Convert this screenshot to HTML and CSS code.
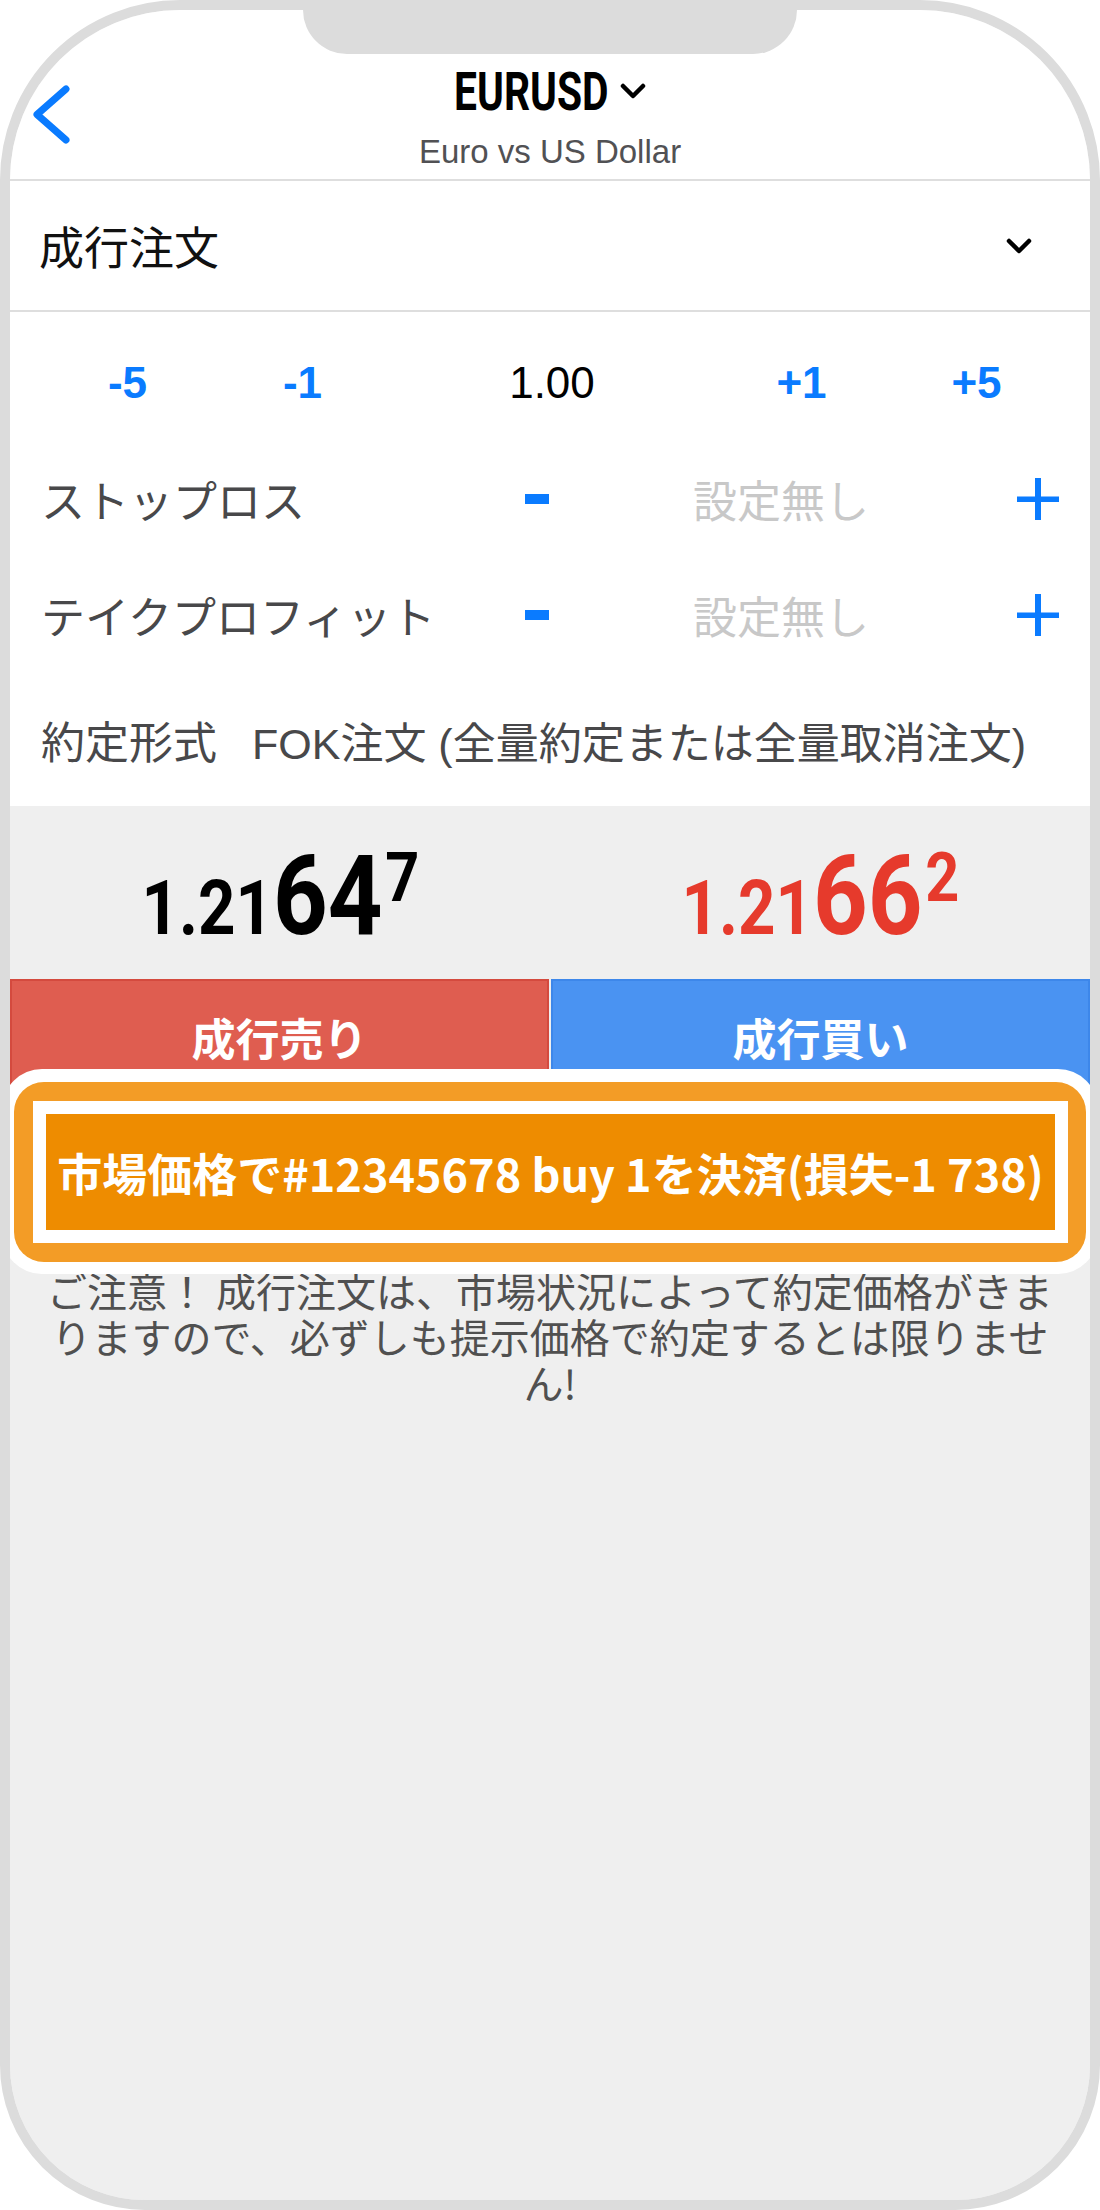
FILE: index.html
```html
<!DOCTYPE html>
<html lang="ja">
<head>
  <meta charset="UTF-8">
  <title>EURUSD 成行注文</title>
  <link rel="stylesheet" href="styles.css">
</head>
<body>

  <div class="phone">
    <div class="notch"></div>

    <header class="nav">
      <a class="back" href="#">
        <svg width="40" height="60" viewBox="0 0 40 60"><polyline points="33,4 4,29.5 33,55" fill="none" stroke="#0a7bff" stroke-width="7" stroke-linecap="round" stroke-linejoin="round"/></svg>
      </a>
      <div class="title">
        <div class="symbol">
          <span class="symbol-name">EURUSD</span>
          <svg class="caret" width="26" height="16" viewBox="0 0 26 16"><polyline points="3,3 13,13 23,3" fill="none" stroke="#000" stroke-width="4.5" stroke-linecap="round" stroke-linejoin="round"/></svg>
        </div>
        <div class="desc">Euro vs US Dollar</div>
      </div>
      <div></div>
    </header>

    <div class="order-type">
      <span>成行注文</span>
      <svg width="26" height="18" viewBox="0 0 26 18"><polyline points="3,4 13,14 23,4" fill="none" stroke="#000" stroke-width="4.5" stroke-linecap="round" stroke-linejoin="round"/></svg>
    </div>

    <section class="params">
      <div class="lot-row">
        <span class="step">-5</span>
        <span class="step">-1</span>
        <span class="lot-value">1.00</span>
        <span class="step">+1</span>
        <span class="step">+5</span>
      </div>

      <div class="param-row">
        <span class="label">ストップロス</span>
        <svg class="minus" width="24" height="10" viewBox="0 0 24 10"><rect width="24" height="10" fill="#0a7bff"/></svg>
        <span class="unset">設定無し</span>
        <svg class="plus" width="42" height="42" viewBox="0 0 42 42"><rect x="18" y="0" width="6" height="42" fill="#0a7bff"/><rect x="0" y="18.5" width="42" height="5.5" fill="#0a7bff"/></svg>
      </div>

      <div class="param-row">
        <span class="label">テイクプロフィット</span>
        <svg class="minus" width="24" height="10" viewBox="0 0 24 10"><rect width="24" height="10" fill="#0a7bff"/></svg>
        <span class="unset">設定無し</span>
        <svg class="plus" width="42" height="42" viewBox="0 0 42 42"><rect x="18" y="0" width="6" height="42" fill="#0a7bff"/><rect x="0" y="18.5" width="42" height="5.5" fill="#0a7bff"/></svg>
      </div>

      <div class="fill-row">
        <span class="label">約定形式</span>
        <span class="fill-value">FOK注文 (全量約定または全量取消注文)</span>
      </div>
    </section>

    <section class="trade">
      <div class="quotes">
        <div class="quote">
          <span class="price">1.21<span class="big">64</span><span class="pip">7</span></span>
        </div>
        <div class="quote ask">
          <span class="price">1.21<span class="big">66</span><span class="pip">2</span></span>
        </div>
      </div>

      <div class="actions">
        <button class="sell">成行売り</button>
        <button class="buy">成行買い</button>
      </div>

      <div class="close-wrap">
        <div class="highlight"><div class="highlight-ring"></div></div>
        <button class="close-btn">市場価格で#12345678 buy 1を決済(損失-1 738)</button>
      </div>

      <p class="note">ご注意！ 成行注文は、市場状況によって約定価格がきまりますので、必ずしも提示価格で約定するとは限りません!</p>
    </section>
  </div>

</body>
</html>
```

FILE: styles.css
```css
body {
  margin: 0;
  padding: 0;
  background: #fff;
  font-family: "Liberation Sans", "Noto Sans CJK JP", sans-serif;
}
.phone {
  position: relative;
  box-sizing: border-box;
  width: 1100px;
  height: 2210px;
  border: 10px solid #dcdcdc;
  border-radius: 180px 180px 145px 145px;
  overflow: hidden;
  background: #efefef;
  display: flex;
  flex-direction: column;
}
.notch {
  position: absolute;
  top: 0;
  left: 293px;
  width: 494px;
  height: 44px;
  background: #dcdcdc;
  border-radius: 0 0 50px 50px;
  z-index: 3;
}

/* nav bar */
.nav {
  display: grid;
  grid-template-columns: 100px 1fr 100px;
  align-items: start;
  padding: 56px 23px 7px;
  background: #fff;
  border-bottom: 2px solid #dedede;
}
.back {
  display: block;
  width: 40px;
  height: 60px;
  margin-top: 19px;
}
.back svg {
  display: block;
}
.title {
  text-align: center;
}
.symbol {
  display: flex;
  justify-content: center;
  align-items: center;
  height: 53px;
}
.symbol-name {
  display: inline-block;
  font-family: Roboto, sans-serif;
  font-weight: 700;
  font-size: 53px;
  line-height: 53px;
  color: #000;
  transform: scaleX(0.77);
  margin: 0 -23px;
}
.caret {
  margin-left: 12px;
  margin-top: -4px;
}
.desc {
  margin-top: 13px;
  font-size: 33px;
  line-height: 40px;
  color: #515154;
}

/* order type */
.order-type {
  display: flex;
  justify-content: space-between;
  align-items: center;
  height: 129px;
  padding: 0 58px 0 29px;
  background: #fff;
  border-bottom: 2px solid #dedede;
  font-size: 45px;
  color: #111;
}

/* parameters */
.params {
  background: #fff;
}
.lot-row {
  display: grid;
  grid-template-columns: 175px 175px 1fr 175px 175px;
  align-items: center;
  height: 116px;
  margin-top: 13px;
  padding: 0 26px 0 30px;
  text-align: center;
  font-size: 44px;
}
.step {
  color: #0a7bff;
  font-weight: 700;
}
.lot-value {
  color: #000;
}
.param-row {
  display: grid;
  grid-template-columns: 456px 80px 408px 105px;
  align-items: center;
  justify-items: center;
  height: 116px;
  padding-left: 31px;
  font-size: 44px;
}
.param-row .label {
  justify-self: start;
}
.label {
  color: #48484a;
}
.unset {
  color: #c8c8c8;
}
.fill-row {
  display: flex;
  align-items: center;
  height: 133px;
  padding-left: 31px;
  font-size: 44px;
}
.fill-value {
  margin-left: 35px;
  font-size: 43px;
  color: #48484a;
}

/* quotes and buttons */
.trade {
  flex: 1;
  background: #efefef;
}
.quotes {
  display: grid;
  grid-template-columns: 1fr 1fr;
  padding: 35px 0 27px;
}
.quote {
  text-align: center;
  line-height: 1;
}
.price {
  display: inline-block;
  font-family: Roboto, sans-serif;
  font-weight: 700;
  font-size: 76px;
  line-height: 1;
  color: #000;
  transform: scaleX(0.86);
}
.price .big {
  font-size: 111px;
}
.price .pip {
  font-size: 69px;
  vertical-align: 33px;
  margin-left: 3px;
}
.ask .price {
  color: #e63a2c;
}
.actions {
  display: grid;
  grid-template-columns: 1fr 1fr;
  gap: 2px;
  height: 121px;
}
.actions button {
  font-family: "Noto Sans CJK JP", sans-serif;
  font-weight: 700;
  font-size: 44px;
  color: #fff;
  border-radius: 0;
  padding: 0 0 6px;
}
.sell {
  background: #df5d50;
  border: 2px solid #d44a3e;
}
.buy {
  background: #4a93f2;
  border: 2px solid #3d87ea;
}

/* close position button with highlight frame */
.close-wrap {
  position: relative;
  margin: 14px 35px 0 36px;
}
.highlight {
  position: absolute;
  top: -45px;
  right: -43px;
  bottom: -44px;
  left: -44px;
  box-sizing: border-box;
  padding: 13px 12px 12px 12px;
  background: #fff;
  border-radius: 40px;
}
.highlight-ring {
  height: 100%;
  background: #f39c26;
  border-radius: 30px;
}
.close-btn {
  position: relative;
  z-index: 1;
  display: block;
  width: 100%;
  height: 116px;
  padding: 0;
  border: none;
  background: #ee8c00;
  box-shadow: 0 0 0 13px #fff;
  font-family: "Noto Sans CJK JP", sans-serif;
  font-weight: 700;
  font-size: 45px;
  color: #fff;
  white-space: nowrap;
}
.note {
  margin: 37px 0 0;
  padding: 0 30px;
  font-family: "Noto Sans CJK JP", sans-serif;
  font-size: 40px;
  line-height: 46px;
  color: #505050;
  text-align: center;
}
```
